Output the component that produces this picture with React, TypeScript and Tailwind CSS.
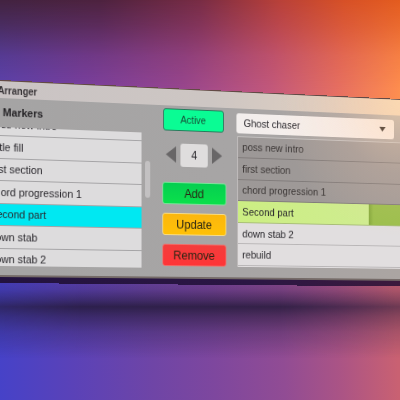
import clsx from "clsx";

const MARKERS = ["poss new intro", "little fill", "first section", "chord progression 1", "Second part", "down stab", "down stab 2"];
const ARRANGEMENT = ["poss new intro", "first section", "chord progression 1", "Second part", "down stab 2", "rebuild"];

const ACTIONS = [
  { label: "Add", theme: "from-[#05cf50] to-[#0be04b] border-[#7ce39a]" },
  { label: "Update", theme: "from-[#fbb60d] to-[#ffc107] border-[#f7dc86]" },
  { label: "Remove", theme: "from-[#f33d3c] to-[#ff3437] border-[#f06e6a]" },
];

function Backdrop() {
  return (
    <div className="absolute inset-0">
      <div className="absolute inset-x-0 top-0 h-[200px] bg-[linear-gradient(97deg,#5a43b0_0%,#7a40a0_22%,#98468f_45%,#c2587c_66%,#e66f62_82%,#fd8c50_96%,#ff9950_100%)]" />
      <div className="absolute inset-x-0 top-0 h-[90px] bg-[linear-gradient(90deg,#42233f_0%,#4d223e_25%,#782c44_50%,#b84038_70%,#d65026_86%,#e35c1f_100%)] [mask-image:linear-gradient(180deg,#000_0%,rgba(0,0,0,0.7)_28%,rgba(0,0,0,0.25)_62%,transparent_100%)]" />
      <div className="absolute inset-x-0 bottom-0 h-[200px] bg-[linear-gradient(88deg,#4642c8_0%,#5a42b8_18%,#6f45a6_38%,#7e479e_53%,#914c94_70%,#ab5485_84%,#c96172_98%)]" />
      {/* Soft shadow cast under the floating panel */}
      <div className="absolute inset-x-0 top-[278px] h-[80px] bg-[linear-gradient(180deg,rgba(38,28,66,0.1)_0%,rgba(38,28,66,0.25)_14%,rgba(36,26,60,0.6)_28%,rgba(36,26,58,0.85)_36%,rgba(36,26,58,0.6)_48%,rgba(38,28,66,0.3)_68%,rgba(38,28,66,0)_100%)] [mask-image:linear-gradient(90deg,rgba(0,0,0,0.8)_0%,#000_20%,#000_70%,rgba(0,0,0,0.65)_100%)]" />
    </div>
  );
}

function MarkerList() {
  return (
    <div className="flex w-[168px] shrink-0 flex-col">
      <h2 className="flex h-[29.5px] items-center pl-[3px] pt-px text-[11.5px] font-bold text-[#252326]">Markers</h2>
      <div className="flex gap-[4.5px]">
        <div className="flex h-[139px] w-[157.5px] flex-col justify-start overflow-hidden bg-[#dddcdd]">
          <div className="-mt-[13.5px]">
            {MARKERS.map((name) => (
              <div
                key={name}
                className={clsx(
                  "flex h-[22.5px] items-center whitespace-nowrap border-b border-[#a5a4a6] pt-px",
                  name === "Second part" && "bg-[#00e8f2]"
                )}
              >
                <span className={name === "little fill" ? "-ml-[9px]" : "-ml-[11.5px]"}>{name}</span>
              </div>
            ))}
          </div>
        </div>
        <div className="mt-[29px] h-[38px] w-[5.5px] rounded-[3px] bg-[#c3c1c2]" />
      </div>
    </div>
  );
}

function Controls() {
  return (
    <div className="ml-[13.5px] flex w-[75px] shrink-0 flex-col items-center pt-[3.5px]">
      <button className="-ml-[2px] h-[22.5px] w-[71px] rounded-[3px] border border-[#257b5b] bg-[#0afc94] text-[11px] leading-none text-[#174c36]">
        Active
      </button>
      <div className="mt-[13px] flex h-6 items-center gap-[5px]">
        <svg viewBox="0 0 12 17" className="h-[17px] w-3 fill-[#686667]">
          <path d="M12 0v17L0 8.5z" />
        </svg>
        <div className="flex h-6 w-[31.5px] items-center justify-center rounded-[3px] bg-[#dfdddd] pt-px text-[12px]">4</div>
        <svg viewBox="0 0 12 17" className="h-[17px] w-3 fill-[#686667]">
          <path d="M0 0v17l12-8.5z" />
        </svg>
      </div>
      <div className="mt-4 flex w-full flex-col gap-[9px]">
        {ACTIONS.map((action) => (
          <button
            key={action.label}
            className={`h-[23px] w-full rounded-[3px] border bg-linear-to-b pt-px text-[13px] leading-none text-[#2a2513] ${action.theme}`}
          >
            {action.label}
          </button>
        ))}
      </div>
    </div>
  );
}

function Arrangement() {
  const current = ARRANGEMENT.indexOf("Second part");

  return (
    <div className="ml-[12px] flex flex-1 flex-col pt-[5px]">
      <div className="flex h-[21px] w-[194.5px] items-center justify-between rounded-[3px] bg-[linear-gradient(90deg,#f2eeed,#faf0e9)] pl-[9px] pr-[11px] pt-px">
        <span>Ghost chaser</span>
        <svg viewBox="0 0 8 5" className="h-[5px] w-[8.5px] fill-[#0c0806]">
          <path d="M0 0h8L4 5z" />
        </svg>
      </div>
      <div className="ml-[1.5px] mt-[3px] border-l border-t border-[#c4c1c0] bg-[#e1dedf] pb-px">
        {ARRANGEMENT.map((name, i) => (
          <div
            key={name}
            className={clsx(
              "flex h-[22.6px] items-center border-b pl-[5px] pt-[1.5px]",
              i < current && "border-[#817c7b] bg-[linear-gradient(90deg,#9c9897,#a29b98)] text-[#3c3736]",
              i === current && "border-[#a8bd78] bg-[linear-gradient(90deg,#ccee83_0,#cfec90_160px,#84a83c_160px,#9bbf4c_166px)]",
              i > current && "border-[#b9b6b7]"
            )}
          >
            {name}
          </div>
        ))}
      </div>
    </div>
  );
}

export default function App() {
  return (
    <main className="relative h-[400px] w-[400px] overflow-hidden font-['Liberation_Sans',Arial,sans-serif]">
      <Backdrop />

      <div className="relative pt-20">
        {/* Panel turned away to the right in perspective */}
        <div className="relative w-[480px] origin-top-left text-[11.5px] leading-none text-[#29272c] [transform:matrix3d(0.92083,0.04374,0,0.00017708,0,1,0,0,0,0,1,0,0,0,0,1)]">
          <div className="h-[195px] border-t border-[#644a46] bg-[linear-gradient(90deg,#a5a4a4_0%,#a7a5a5_55%,#aba5a2_100%)]">
            <header className="flex h-[16.5px] items-center bg-[linear-gradient(90deg,#cac4c4_0%,#cdc6c3_50%,#dccdc1_75%,#f6d6b4_100%)] text-[10.2px] font-bold text-[#343033]">
              <span className="-ml-[2.5px] pt-[3.5px]">Arranger</span>
            </header>
            <div className="flex">
              <MarkerList />
              <Controls />
              <Arrangement />
            </div>
          </div>
          <div className="h-[2px] bg-[#756b68]" />
          <div className="h-[6px] bg-[linear-gradient(90deg,#23133f,#2b1644_60%,#3d1a3c)]" />

          {/* Warm light catching the top right of the panel */}
          <div className="pointer-events-none absolute inset-x-0 top-px h-[194px] bg-[radial-gradient(circle_at_470px_0px,rgba(255,218,175,0.6)_0,rgba(255,208,170,0.35)_40px,rgba(255,200,165,0.16)_80px,transparent_150px)]" />
        </div>
      </div>
    </main>
  );
}
